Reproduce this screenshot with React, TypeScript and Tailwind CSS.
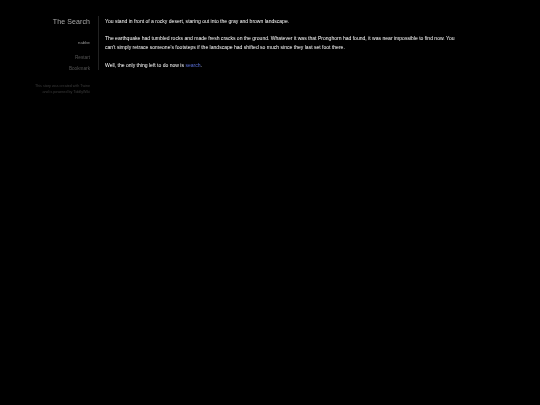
export default function App() {
  return (
    <div className="min-h-[405px] w-[540px] bg-black font-['Liberation_Sans',Arial,sans-serif] text-[5.05px] leading-[9.4px] text-white">
      <div className="flex pt-[16px] blur-[0.2px]">
        <div className="flex w-[99px] flex-col">
          <div className="flex h-[54px] flex-col items-end border-r border-[#222222] pr-[8px]">
            <h1 className="mt-[1px] text-[7px] leading-[9px] font-normal tracking-[0.1px] text-[#aaaaaa]">The Search</h1>
            <div className="mt-[12px] text-[4.3px] text-[#999999]">nabbe</div>
            <div className="mt-[6px] text-[4.7px] text-[#555555]">Restart</div>
            <div className="mt-[1.5px] text-[4.7px] text-[#555555]">Bookmark</div>
          </div>
          <div className="mt-[14px] pr-[9px] text-right text-[3.7px] leading-[5.6px] text-[#3d3d3d]">
            This story was created with Twine<br />and is powered by TiddlyWiki
          </div>
        </div>
        <div className="ml-[6px] w-[352px] pt-[0.5px]">
          <p>You stand in front of a rocky desert, staring out into the gray and brown landscape.</p>
          <p className="mt-[8px]">The earthquake had tumbled rocks and made fresh cracks on the ground. Whatever it was that Pronghorn had found, it was near impossible to find now. You can't simply retrace someone's footsteps if the landscape had shifted so much since they last set foot there.</p>
          <p className="mt-[8px]">Well, the only thing left to do now is <span className="text-[#5a70d8]">search</span>.</p>
        </div>
      </div>
    </div>
  );
}
